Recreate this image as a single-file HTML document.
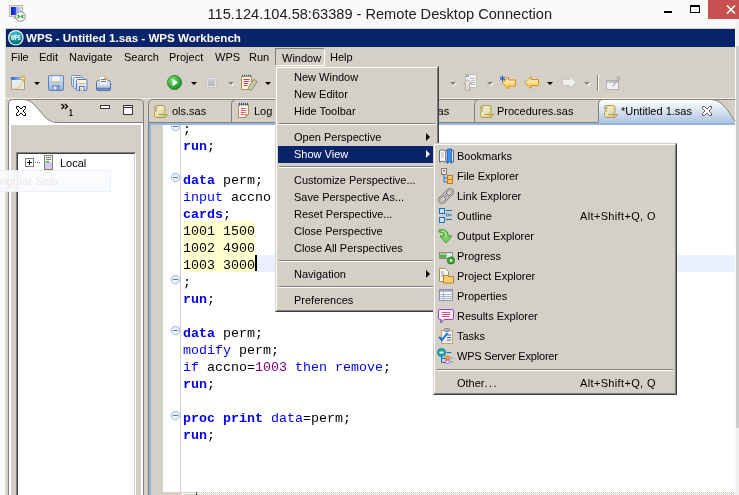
<!DOCTYPE html>
<html><head><meta charset="utf-8">
<style>
*{margin:0;padding:0;box-sizing:border-box}
html,body{width:739px;height:495px;overflow:hidden;background:#fafafa}
body{-webkit-font-smoothing:antialiased;will-change:transform}
body{position:relative;font-family:"Liberation Sans",sans-serif;font-size:11px;color:#000}
.a{position:absolute}
.g{background:#d4d0c8}
.t{position:absolute;white-space:pre;line-height:17px}
.code{position:absolute;left:183px;font-family:"Liberation Mono",monospace;font-size:13.333px;line-height:17px;white-space:pre;color:#000}
.k{color:#0000e8;font-weight:bold}
.r{color:#0000f0}
.n{color:#800080}
.dd{position:absolute;width:0;height:0;border-left:3px solid transparent;border-right:3px solid transparent;border-top:3px solid #000}
.ddg{border-top-color:#808080;filter:drop-shadow(1px 1px 0 #fff)}
.mi{position:absolute;left:18px;height:17px;line-height:17px;white-space:pre}
.si{position:absolute;left:23px;height:20px;line-height:20px;white-space:pre}
.sc{position:absolute;left:146px;height:20px;line-height:20px;white-space:pre}
.sep{position:absolute;height:2px;border-top:1px solid #808080;border-bottom:1px solid #fff}
.ico{position:absolute;left:5px;width:16px;height:16px}
</style></head><body>

<!-- RDP title bar -->
<div class="a" style="left:0;top:0;width:739px;height:28px;background:#fafafa"></div>
<svg class="a" style="left:8px;top:4px" width="18" height="18" viewBox="0 0 18 18">
  <defs><linearGradient id="mg" x1="0" x2="1"><stop offset="0" stop-color="#0818c8"/><stop offset="0.45" stop-color="#2848e8"/><stop offset="0.55" stop-color="#98b0f0"/><stop offset="1" stop-color="#c8d8f8"/></linearGradient></defs>
  <rect x="1.5" y="1.5" width="13" height="11" fill="#e8e4d8" stroke="#c0bcb0"/>
  <rect x="3" y="3" width="10" height="8" fill="url(#mg)"/>
  <rect x="5" y="13" width="6" height="2" fill="#c8c4b8"/>
  <circle cx="12.5" cy="12.5" r="4.8" fill="#f4f4f4" stroke="#888" stroke-width="1"/>
  <path d="M9.8 11 l1.6 1.5 l-1.6 1.5 M15.2 11 l-1.6 1.5 l1.6 1.5" fill="none" stroke="#20a020" stroke-width="1.3"/>
</svg>
<div class="t" style="left:207.5px;top:5px;font-size:14.6px;line-height:18px;color:#202020">115.124.104.58:63389 - Remote Desktop Connection</div>
<div class="a" style="left:664px;top:11px;width:8px;height:2px;background:#000"></div>
<div class="a" style="left:690px;top:5px;width:10px;height:8px;border:1px solid #000;border-top-width:2px"></div>
<div class="a" style="left:708px;top:0;width:31px;height:19px;background:#c75050"></div>
<svg class="a" style="left:726px;top:5px" width="10" height="9" viewBox="0 0 10 9"><path d="M1 0.5 L9 8.5 M9 0.5 L1 8.5" stroke="#fff" stroke-width="1.6"/></svg>

<!-- RDP right scrollbar -->
<div class="a" style="left:736px;top:19px;width:3px;height:27px;background:#f0f0f0"></div>
<div class="a" style="left:736px;top:46px;width:3px;height:382px;background:#cdcdcd"></div>
<div class="a" style="left:736px;top:428px;width:3px;height:67px;background:#f0f0f0"></div>

<!-- App window -->
<div class="a g" style="left:5px;top:28px;width:730px;height:467px"></div>
<div class="a" style="left:5px;top:28px;width:1px;height:467px;background:#dcdcdc"></div>
<div class="a" style="left:735px;top:28px;width:1px;height:467px;background:#fafafa"></div>
<div class="a" style="left:6px;top:29px;width:729px;height:18px;background:#0a246a"></div>
<svg class="a" style="left:7px;top:29px" width="18" height="18" viewBox="0 0 18 18">
  <defs><radialGradient id="wg" cx="0.45" cy="0.3" r="0.75"><stop offset="0" stop-color="#50d0d8"/><stop offset="0.6" stop-color="#10909a"/><stop offset="1" stop-color="#006068"/></radialGradient></defs>
  <circle cx="8.8" cy="8.8" r="7.8" fill="#f4fafa"/>
  <circle cx="8.8" cy="8.8" r="6.6" fill="url(#wg)"/>
  <text x="8.8" y="11.3" font-family="Liberation Sans" font-size="7" font-weight="bold" fill="#fff" text-anchor="middle" textLength="10" lengthAdjust="spacingAndGlyphs">WPS</text>
</svg>
<div class="t" style="left:26px;top:29px;line-height:18px;font-weight:bold;color:#fff;font-size:11.6px">WPS - Untitled 1.sas - WPS Workbench</div>

<!-- Menubar -->
<div class="t" style="left:11px;top:49px">File</div>
<div class="t" style="left:39px;top:49px">Edit</div>
<div class="t" style="left:69px;top:49px">Navigate</div>
<div class="t" style="left:124px;top:49px">Search</div>
<div class="t" style="left:169px;top:49px">Project</div>
<div class="t" style="left:215px;top:49px">WPS</div>
<div class="t" style="left:249px;top:49px">Run</div>
<div class="a" style="left:275px;top:48px;width:50px;height:18px;border-top:1px solid #808080;border-left:1px solid #808080;border-right:1px solid #fff;border-bottom:1px solid #fff"></div>
<div class="t" style="left:282px;top:50px">Window</div>
<div class="t" style="left:330px;top:49px">Help</div>

<!-- Toolbar -->
<div class="a" style="left:5px;top:98px;width:730px;height:1px;background:#f4f0e4"></div>


<!-- Toolbar icons -->
<svg class="a" style="left:10px;top:75px" width="17" height="16" viewBox="0 0 17 16">
  <defs><linearGradient id="nb" x1="0" x2="0" y1="0" y2="1"><stop offset="0" stop-color="#f0f6fc"/><stop offset="1" stop-color="#d8e8f8"/></linearGradient>
  <linearGradient id="nt" x1="0" x2="1"><stop offset="0" stop-color="#3868c0"/><stop offset="1" stop-color="#a8c8f0"/></linearGradient></defs>
  <rect x="1.5" y="2.5" width="13" height="12" fill="url(#nb)" stroke="#b8a068"/>
  <rect x="1" y="2" width="11" height="3" fill="url(#nt)"/>
  <path d="M4 14 Q11 13.5 12.5 6" stroke="#f0c848" stroke-width="1.1" fill="none"/>
  <path d="M13 0.5 v6 M10 3.5 h6" stroke="#c89830" stroke-width="2.2"/>
  <path d="M13 1 v5 M10.5 3.5 h5" stroke="#fff4c0" stroke-width="0.9"/>
</svg>
<div class="dd" style="left:34px;top:82px"></div>
<svg class="a" style="left:48px;top:75px" width="16" height="16" viewBox="0 0 16 16">
  <defs><linearGradient id="fb" x1="0" x2="0" y1="0" y2="1"><stop offset="0" stop-color="#dce8f8"/><stop offset="1" stop-color="#98b4e0"/></linearGradient></defs>
  <rect x="0.5" y="0.5" width="15" height="15" rx="1.5" fill="url(#fb)" stroke="#5c80c0"/>
  <rect x="3.5" y="1" width="9" height="6" fill="#f4f8fc" stroke="#a8c0e0" stroke-width="0.8"/>
  <path d="M4 6.5 h8" stroke="#e8c060" stroke-width="1"/>
  <rect x="4.5" y="10.5" width="7" height="5" fill="#5c80c0"/>
  <rect x="5.5" y="11.5" width="3" height="3" fill="#e8f0f8"/>
  <rect x="9" y="12" width="1.5" height="2" fill="#f0b040"/>
</svg>
<svg class="a" style="left:71px;top:75px" width="17" height="16" viewBox="0 0 17 16">
  <defs><linearGradient id="fa" x1="0" x2="0" y1="0" y2="1"><stop offset="0" stop-color="#f4f8fc"/><stop offset="1" stop-color="#c8d8f0"/></linearGradient></defs>
  <rect x="0.5" y="0.5" width="10" height="11" rx="1" fill="url(#fa)" stroke="#7890c0"/>
  <rect x="2.5" y="2.5" width="10" height="11" rx="1" fill="url(#fa)" stroke="#7890c0"/>
  <rect x="5.5" y="4.5" width="10.5" height="11" rx="1" fill="url(#fa)" stroke="#5c78b8"/>
  <rect x="7.5" y="5" width="6.5" height="4" fill="#f8f4e8"/>
  <path d="M7.5 8.5 h6.5" stroke="#e8b850" stroke-width="1"/>
  <rect x="8" y="11" width="5.5" height="4.5" fill="#4c70b0"/>
  <rect x="9" y="12" width="3.5" height="3.5" fill="#f0f4fa"/>
  <rect x="9.5" y="13" width="1" height="2" fill="#e8b040"/>
</svg>
<svg class="a" style="left:95px;top:75px" width="17" height="16" viewBox="0 0 17 16">
  <defs><linearGradient id="pb" x1="0" x2="0" y1="0" y2="1"><stop offset="0" stop-color="#f0f4fc"/><stop offset="0.6" stop-color="#c0d0f0"/><stop offset="1" stop-color="#7898d0"/></linearGradient></defs>
  <path d="M1.5 7.5 Q1.5 5.5 3.5 5.5 H13.5 Q15.5 5.5 15.5 7.5 V14 Q15.5 15.5 14 15.5 H3 Q1.5 15.5 1.5 14 z" fill="url(#pb)" stroke="#4c6cb0"/>
  <path d="M2 13.5 H15" stroke="#5878b8" stroke-width="1.5"/>
  <path d="M4.5 9.5 V1.5 H10 L12.5 4 V9.5" fill="#fafaf4" stroke="#c8c0a0" stroke-width="0.8"/>
  <path d="M10 1.5 V4 H12.5" fill="#f0b860" stroke="#d09040" stroke-width="0.8"/>
  <path d="M6 4.5 h5 M6 6.5 h5" stroke="#5878b8" stroke-width="1"/>
</svg>

<svg class="a" style="left:167px;top:75px" width="15" height="15" viewBox="0 0 15 15">
  <defs><radialGradient id="rg" cx="0.35" cy="0.3" r="0.8"><stop offset="0" stop-color="#78e070"/><stop offset="1" stop-color="#108818"/></radialGradient></defs>
  <circle cx="7.5" cy="7.5" r="7" fill="url(#rg)" stroke="#187820" stroke-width="0.8"/>
  <path d="M5.5 3.8 L11.2 7.5 L5.5 11.2 z" fill="#fff"/>
</svg>
<div class="dd" style="left:191px;top:82px"></div>
<svg class="a" style="left:206px;top:77px" width="11" height="11" viewBox="0 0 11 11">
  <defs><linearGradient id="st" x1="0" x2="0" y1="0" y2="1"><stop offset="0" stop-color="#d0d0d0"/><stop offset="1" stop-color="#b8b8b8"/></linearGradient></defs>
  <rect x="0.5" y="0.5" width="10" height="10" rx="1" fill="#e4e4e4" stroke="#c8c8c8"/>
  <rect x="2" y="2" width="7" height="7" fill="url(#st)"/>
</svg>
<div class="dd ddg" style="left:228px;top:82px"></div>
<svg class="a" style="left:240px;top:74px" width="18" height="17" viewBox="0 0 18 17">
  <path d="M1.5 2.5 h10 v11 l-2 2 h-8 z" fill="#fffcf4" stroke="#b09040"/>
  <path d="M2 1.5 h9" stroke="#305898" stroke-width="1.6" stroke-dasharray="1 1"/>
  <path d="M3.5 5.5 h6 M3.5 7.5 h6 M3.5 9.5 h5 M3.5 11.5 h4" stroke="#e83838" stroke-width="1"/>
  <path d="M8 14 L13 6 Q14.5 5 16 6.5 L17 8 L12 15.5 Q10 16.5 8.5 15.5 z" fill="#c8c8a0" stroke="#808060" stroke-width="0.8"/>
</svg>
<div class="dd" style="left:265px;top:82px"></div>

<div class="dd ddg" style="left:450px;top:82px"></div>
<svg class="a" style="left:463px;top:74px" width="15" height="17" viewBox="0 0 15 17">
  <rect x="2.5" y="0.5" width="11" height="13" fill="#f4f4f4" stroke="#c0c0c0"/>
  <rect x="3" y="1" width="3" height="2" fill="#a8a8a8"/>
  <path d="M7 4.5 h5 M8 6.5 h4 M8 8.5 h4 M8 10.5 h4" stroke="#b8b8b8" stroke-width="1"/>
  <path d="M4.5 5.5 L0.5 9.5 H2.5 V16.5 H6.5 V9.5 H8.5 z" fill="#e8e0d8" stroke="#b0aca4" stroke-width="1"/>
</svg>
<div class="dd ddg" style="left:487px;top:82px"></div>
<svg class="a" style="left:499px;top:75px" width="18" height="16" viewBox="0 0 18 16">
  <defs><linearGradient id="ya" x1="0" x2="0" y1="0" y2="1"><stop offset="0" stop-color="#fff8d0"/><stop offset="1" stop-color="#f8c850"/></linearGradient></defs>
  <path d="M3.5 8 L9.5 2 V5 H16.5 V11 H9.5 V14 z" fill="url(#ya)" stroke="#d89018" stroke-linejoin="miter"/>
  <path d="M3.5 0.5 v6 M0.8 2 l5.4 3 M0.8 5 l5.4 -3" stroke="#2050b0" stroke-width="1"/>
</svg>
<svg class="a" style="left:524px;top:76px" width="16" height="14" viewBox="0 0 16 14">
  <path d="M1 6.5 L7 0.5 V3.5 H14.5 V9.5 H7 V12.5 z" fill="url(#ya)" stroke="#d89018"/>
</svg>
<div class="dd" style="left:547px;top:82px"></div>
<svg class="a" style="left:561px;top:76px" width="16" height="14" viewBox="0 0 16 14">
  <path d="M15 6.5 L9 0.5 V3.5 H1.5 V9.5 H9 V12.5 z" fill="#f0f0f0" stroke="#c8c8c8"/>
</svg>
<div class="dd ddg" style="left:584px;top:82px"></div>
<div class="a" style="left:597px;top:75px;width:1px;height:16px;background:#808080"></div>
<div class="a" style="left:598px;top:75px;width:1px;height:16px;background:#fff"></div>
<svg class="a" style="left:606px;top:76px" width="15" height="14" viewBox="0 0 15 14">
  <rect x="0.5" y="4.5" width="12" height="9" fill="#f4f4f4" stroke="#b0b0b0"/>
  <rect x="1" y="5" width="11" height="2" fill="#c4c4cc"/>
  <path d="M6.5 10.5 L12.5 3" stroke="#a0a0a0" stroke-width="1.2"/>
  <path d="M10 1.5 L13.5 1 L13 4.5" fill="none" stroke="#a8a8a8" stroke-width="1"/>
</svg>


<!-- Left panel -->
<svg class="a" style="left:0;top:95px" width="150" height="400" viewBox="0 95 150 400">
  <path d="M9 125 V104 Q9 100 13 100 H23 C30 100 33 103 39 110 C45 117 49 122 57 122.5 H142 V125 z" fill="#fff"/>
  <path d="M8.5 495 V104 Q8.5 99.5 13 99.5 H139 Q143.5 99.5 143.5 104 V495" fill="none" stroke="#808080"/>
  <path d="M23 99.5 C30 99.5 33 103 39 110 C45 117 49 122.5 57 122.5 H143" fill="none" stroke="#808080"/>
</svg>
<div class="a" style="left:9px;top:123px;width:134px;height:2px;background:#fff"></div>
<div class="a" style="left:9px;top:123px;width:2px;height:372px;background:#fff"></div>
<div class="a" style="left:141px;top:123px;width:2px;height:372px;background:#fff"></div>
<svg class="a" style="left:16px;top:106px" width="10" height="10" viewBox="0 0 10 10">
  <path d="M0.5 0.5 H2.5 L5 3 L7.5 0.5 H9.5 V2.5 L7 5 L9.5 7.5 V9.5 H7.5 L5 7 L2.5 9.5 H0.5 V7.5 L3 5 L0.5 2.5 z" fill="#fff" stroke="#000" stroke-width="1"/>
</svg>
<svg class="a" style="left:61px;top:103px" width="12" height="13" viewBox="0 0 12 13">
  <path d="M0.5 1 L3 3.5 L0.5 6 M4 1 L6.5 3.5 L4 6" fill="none" stroke="#000" stroke-width="1.3"/>
  <path d="M8.5 7.5 L10 6.5 V12.5 M8.5 12.5 H11.5" fill="none" stroke="#000" stroke-width="1"/>
</svg>
<div class="a" style="left:100px;top:105px;width:10px;height:4px;border:1px solid #383838;background:#fff"></div>
<div class="a" style="left:123px;top:105px;width:10px;height:10px;border:1px solid #383838;background:#fff"></div>
<div class="a" style="left:124px;top:107px;width:8px;height:1px;background:#383838"></div>
<!-- tree box -->
<div class="a" style="left:16px;top:152px;width:120px;height:343px;border-left:1px solid #808080;border-top:1px solid #808080;border-right:1px solid #fff;background:#fff"></div>
<div class="a" style="left:17px;top:153px;width:118px;height:342px;border-left:1px solid #404040;border-top:1px solid #404040;border-right:1px solid #d4d0c8;background:#fff"></div>
<svg class="a" style="left:25px;top:158px" width="16" height="9" viewBox="0 0 16 9">
  <rect x="0.5" y="0.5" width="8" height="8" fill="#fff" stroke="#808080"/>
  <path d="M2 4.5 h5 M4.5 2 v5" stroke="#000" stroke-width="1"/>
  <path d="M10 4.5 h1 M12 4.5 h1 M14 4.5 h1" stroke="#808080"/>
</svg>
<svg class="a" style="left:44px;top:155px" width="9" height="15" viewBox="0 0 9 15">
  <rect x="0.5" y="0.5" width="8" height="14" fill="#d8c8f0" stroke="#808060"/>
  <rect x="1" y="1" width="7" height="6" fill="#f4f4f4"/>
  <path d="M2 2.5 h5 M2 4.5 h5" stroke="#606060" stroke-width="0.8"/>
  <rect x="2" y="6" width="3" height="1.5" fill="#20d020"/>
</svg>
<div class="t" style="left:60px;top:155px">Local</div>
<!-- snip overlay -->
<div class="a" style="left:-1px;top:170px;width:112px;height:22px;background:rgba(250,251,253,0.93);border:1px solid rgba(232,238,247,0.95)"></div>
<div class="t" style="left:-30px;top:172px;font-size:11.5px;line-height:18px;color:#ede5e5">Rectangular Snip</div>

<!-- Editor panel -->
<svg class="a" style="left:145px;top:95px" width="594" height="35" viewBox="145 95 594 35">
  <path d="M148.5 130 V104 Q148.5 99.5 153 99.5 H735" fill="none" stroke="#808080"/>
  <path d="M149 122.5 H598" stroke="#808080"/>
  <path d="M231.5 122 V104 Q231.5 100 235.5 99.5" fill="none" stroke="#808080"/>
  <path d="M474.5 122 V104 Q474.5 100 478.5 99.5" fill="none" stroke="#808080"/>
  <defs><linearGradient id="tg" x1="0" y1="0" x2="0" y2="1"><stop offset="0" stop-color="#ffffff"/><stop offset="1" stop-color="#a6bfe0"/></linearGradient></defs>
  <path d="M599 125 V104 Q599 100 603 100 H711 C718 100 722 104 727 110 C731 115 733 119 735 121 V125 z" fill="url(#tg)"/>
  <path d="M598.5 122.5 V104 Q598.5 99.5 603 99.5 H711 C718 99.5 722 103.5 727 109.5 C731 114.5 733 119 735 121" fill="none" stroke="#808080"/>
</svg>
<div class="a" style="left:149px;top:123px;width:586px;height:2px;background:#98b4dc"></div>
<div class="a" style="left:149px;top:123px;width:2px;height:372px;background:#98b4dc"></div>
<div class="a" style="left:148px;top:125px;width:1px;height:370px;background:#808080"></div>
<div class="a" style="left:151px;top:125px;width:584px;height:367px;background:#fff"></div>
<div class="a g" style="left:151px;top:125px;width:12px;height:367px"></div>
<div class="a" style="left:180px;top:125px;width:1px;height:367px;background:#d4d0c8"></div>
<!-- horizontal scrollbar strip -->
<div class="a g" style="left:151px;top:492px;width:584px;height:3px"></div>
<div class="a" style="left:197px;top:492px;width:538px;height:3px;background-image:conic-gradient(#fff 25%,#d4d0c8 0 50%,#fff 0 75%,#d4d0c8 0);background-size:2px 2px"></div>
<div class="a" style="left:182px;top:493px;width:14px;height:2px;border-top:1px solid #fff;border-left:1px solid #fff;background:#d4d0c8"></div>
<div class="a" style="left:196px;top:492px;width:1px;height:3px;background:#404040"></div>


<!-- Code -->
<div class="a" style="left:151px;top:125px;width:584px;height:367px;overflow:hidden">
  <div class="a" style="left:32px;top:96px;width:72px;height:51px;background:#ffffd0"></div>
  <div class="a" style="left:105px;top:130px;width:479px;height:17px;background:#e8f2fe"></div>
  <div class="a" style="left:104px;top:130px;width:2px;height:16px;background:#000"></div>
  <div class="code" style="left:32px;top:-4.5px">;
<span class="k">run</span>;

<span class="k">data</span> perm;
<span class="r">input</span> accno amount;
<span class="k">cards</span>;
1001 1500
1002 4900
1003 3000
;
<span class="k">run</span>;

<span class="k">data</span> perm;
<span class="r">modify</span> perm;
<span class="r">if</span> accno=<span class="n">1003</span> <span class="r">then</span> <span class="r">remove</span>;
<span class="k">run</span>;

<span class="k">proc</span> <span class="k">print</span> <span class="r">data</span>=perm;
<span class="k">run</span>;</div>
</div>
<svg class="a" style="left:170px;top:125px" width="12" height="320" viewBox="0 125 12 320">
  <defs><radialGradient id="fg" cx="0.5" cy="0.6" r="0.6"><stop offset="0" stop-color="#f4faff"/><stop offset="1" stop-color="#d8e6f4"/></radialGradient></defs>
  <g id="fold"><circle cx="5.5" cy="126.5" r="4.3" fill="url(#fg)" stroke="#a8bcd8" stroke-width="1"/><path d="M3 126.5 h5" stroke="#6878a0" stroke-width="1"/></g>
  <g transform="translate(0,51)"><circle cx="5.5" cy="126.5" r="4.3" fill="url(#fg)" stroke="#a8bcd8" stroke-width="1"/><path d="M3 126.5 h5" stroke="#6878a0" stroke-width="1"/></g>
  <g transform="translate(0,153)"><circle cx="5.5" cy="126.5" r="4.3" fill="url(#fg)" stroke="#a8bcd8" stroke-width="1"/><path d="M3 126.5 h5" stroke="#6878a0" stroke-width="1"/></g>
  <g transform="translate(0,204)"><circle cx="5.5" cy="126.5" r="4.3" fill="url(#fg)" stroke="#a8bcd8" stroke-width="1"/><path d="M3 126.5 h5" stroke="#6878a0" stroke-width="1"/></g>
  <g transform="translate(0,289)"><circle cx="5.5" cy="126.5" r="4.3" fill="url(#fg)" stroke="#a8bcd8" stroke-width="1"/><path d="M3 126.5 h5" stroke="#6878a0" stroke-width="1"/></g>
</svg>

<!-- Tabs content -->
<svg class="a" style="left:153px;top:105px" width="15" height="13" viewBox="0 0 15 13">
  <defs><linearGradient id="sg" x1="0" y1="0" x2="1" y2="1"><stop offset="0" stop-color="#f4f4d8"/><stop offset="0.5" stop-color="#e6e4b4"/><stop offset="1" stop-color="#b8b488"/></linearGradient></defs>
  <g id="scrollp">
  <path d="M1.5 2.5 Q1.5 0.5 3.5 0.5 H10 Q12 0.5 12 2.5 V6.5 Q12 8 10.5 8.5 V9.5 H14.5 L13 11.5 Q12.5 12.5 11 12.5 H4 Q1.5 12.5 1.5 10.5 V7.5 Q1.5 6 3.5 6 V5 Q1.5 5 1.5 2.5 z" fill="url(#sg)" stroke="#b89838" stroke-width="1"/>
  <circle cx="3.3" cy="2.8" r="1.3" fill="#a8b098"/>
  <path d="M5 9.5 H10" stroke="#a09858" stroke-width="0.8"/>
  </g>
</svg>
<div class="t" style="left:172px;top:103px">ols.sas</div>
<svg class="a" style="left:238px;top:102px" width="12" height="16" viewBox="0 0 12 16">
  <path d="M0.5 2.5 H10.5 V12.5 L7.5 15.5 H0.5 z" fill="#f4f8fe" stroke="#a89040"/>
  <path d="M7.5 15.5 V12.5 H10.5" fill="#c8b878" stroke="#a89040" stroke-width="0.8"/>
  <path d="M1 1.5 h1 M3 1.5 h1 M5 1.5 h1 M7 1.5 h1 M9 1.5 h1" stroke="#2050a0" stroke-width="1.4"/>
  <path d="M1 3 h1 M3 3 h1 M5 3 h1 M7 3 h1 M9 3 h1" stroke="#102858" stroke-width="1"/>
  <defs><linearGradient id="rl" x1="0" x2="1"><stop offset="0" stop-color="#f02020"/><stop offset="1" stop-color="#f8c0c0"/></linearGradient></defs>
  <path d="M3 6.5 h6 M3 8.5 h6 M3 10.5 h6 M3 12.5 h4" stroke="url(#rl)" stroke-width="1"/>
</svg>
<div class="t" style="left:254px;top:103px">Log</div>
<div class="t" style="left:415px;top:103px">ols.sas</div>
<div class="t" style="left:497px;top:103px">Procedures.sas</div>
<div class="t" style="left:621px;top:103px">*Untitled 1.sas</div>
<svg class="a" style="left:702px;top:106px" width="10" height="10" viewBox="0 0 10 10">
  <path d="M0.5 0.5 H2.5 L5 3 L7.5 0.5 H9.5 V2.5 L7 5 L9.5 7.5 V9.5 H7.5 L5 7 L2.5 9.5 H0.5 V7.5 L3 5 L0.5 2.5 z" fill="#fff" stroke="#606060" stroke-width="1"/>
</svg>


<!-- Window menu -->
<div class="a" style="left:275px;top:66px;width:164px;height:246px;background:#d4d0c8;border-top:1px solid #d4d0c8;border-left:1px solid #d4d0c8;border-right:1px solid #404040;border-bottom:1px solid #404040">
 <div class="a" style="left:0;top:0;width:162px;height:244px;border-top:1px solid #fff;border-left:1px solid #fff;border-right:1px solid #808080;border-bottom:1px solid #808080"></div>
 <div class="mi" style="top:2px">New Window</div>
 <div class="mi" style="top:19px">New Editor</div>
 <div class="mi" style="top:36px">Hide Toolbar</div>
 <div class="sep" style="left:3px;top:56px;width:156px"></div>
 <div class="mi" style="top:62px">Open Perspective</div>
 <div class="a" style="left:150px;top:66px;width:0;height:0;border-top:4px solid transparent;border-bottom:4px solid transparent;border-left:4px solid #000"></div>
 <div class="a" style="left:2px;top:79px;width:158px;height:17px;background:#0a246a"></div>
 <div class="mi" style="top:79px;color:#fff">Show View</div>
 <div class="a" style="left:150px;top:83px;width:0;height:0;border-top:4px solid transparent;border-bottom:4px solid transparent;border-left:4px solid #fff"></div>
 <div class="sep" style="left:3px;top:99px;width:156px"></div>
 <div class="mi" style="top:105px">Customize Perspective...</div>
 <div class="mi" style="top:122px">Save Perspective As...</div>
 <div class="mi" style="top:139px">Reset Perspective...</div>
 <div class="mi" style="top:156px">Close Perspective</div>
 <div class="mi" style="top:173px">Close All Perspectives</div>
 <div class="sep" style="left:3px;top:193px;width:156px"></div>
 <div class="mi" style="top:199px">Navigation</div>
 <div class="a" style="left:150px;top:203px;width:0;height:0;border-top:4px solid transparent;border-bottom:4px solid transparent;border-left:4px solid #000"></div>
 <div class="sep" style="left:3px;top:219px;width:156px"></div>
 <div class="mi" style="top:225px">Preferences</div>
</div>

<!-- Show View submenu -->
<div class="a" style="left:433px;top:143px;width:244px;height:252px;background:#d4d0c8;border-top:1px solid #d4d0c8;border-left:1px solid #d4d0c8;border-right:1px solid #404040;border-bottom:1px solid #404040">
 <div class="a" style="left:0;top:0;width:242px;height:250px;border-top:1px solid #fff;border-left:1px solid #fff;border-right:1px solid #808080;border-bottom:1px solid #808080"></div>
 <div class="si" style="top:2px">Bookmarks</div>
 <div class="si" style="top:22px">File Explorer</div>
 <div class="si" style="top:42px">Link Explorer</div>
 <div class="si" style="top:62px">Outline</div>
 <div class="sc" style="top:62px;letter-spacing:0.35px">Alt+Shift+Q, O</div>
 <div class="si" style="top:82px">Output Explorer</div>
 <div class="si" style="top:102px">Progress</div>
 <div class="si" style="top:122px">Project Explorer</div>
 <div class="si" style="top:142px">Properties</div>
 <div class="si" style="top:162px">Results Explorer</div>
 <div class="si" style="top:182px">Tasks</div>
 <div class="si" style="top:202px;letter-spacing:-0.2px">WPS Server Explorer</div>
 <div class="sep" style="left:3px;top:225px;width:236px"></div>
 <div class="mi" style="top:231px;left:23px">Other<span style="letter-spacing:1.4px">...</span></div>
 <div class="mi" style="top:231px;left:146px;letter-spacing:0.35px">Alt+Shift+Q, Q</div>
</div>


<!-- submenu icons (abs) -->
<svg class="a" style="left:438px;top:148px" width="16" height="16" viewBox="0 0 16 16">
  <path d="M1.5 2.5 Q4 1 8 2.5 V14 Q4 12.5 1.5 14 z" fill="#f8f8f0" stroke="#686880"/>
  <path d="M8 2.5 Q12 1 15.5 2.5 V14 Q12 12.5 8 14 z" fill="#f0f0e8" stroke="#686880"/>
  <path d="M3 5 h3 M3 7 h3 M3 9 h3" stroke="#a0a8b8" stroke-width="0.8"/>
  <path d="M9.5 1 h4 v14.5 l-2 -2 l-2 2 z" fill="#3890e8" stroke="#1060c0" stroke-width="0.8"/>
</svg>
<svg class="a" style="left:438px;top:168px" width="16" height="16" viewBox="0 0 16 16">
  <rect x="3.5" y="0.5" width="5" height="6" fill="#e8e0f0" stroke="#808060"/>
  <rect x="5" y="2" width="2" height="1.5" fill="#c060a0"/>
  <path d="M6 7 V14 M6 10 H10 M6 14 H10" stroke="#2070c0" stroke-width="1"/>
  <rect x="9.5" y="7.5" width="5" height="4" fill="#f8c860" stroke="#c07820"/>
  <rect x="9.5" y="11.5" width="5" height="4" fill="#f8c860" stroke="#c07820"/>
</svg>
<svg class="a" style="left:438px;top:188px" width="16" height="16" viewBox="0 0 16 16">
  <g transform="rotate(-45 8 8)" fill="none">
    <rect x="-0.5" y="5.2" width="10" height="5.6" rx="2.8" stroke="#6c6c58" stroke-width="2"/>
    <rect x="6.5" y="5.2" width="10" height="5.6" rx="2.8" stroke="#6c6c58" stroke-width="2"/>
    <rect x="-0.5" y="5.2" width="10" height="5.6" rx="2.8" stroke="#e0d0f4" stroke-width="0.9"/>
    <rect x="6.5" y="5.2" width="10" height="5.6" rx="2.8" stroke="#e0d0f4" stroke-width="0.9"/>
  </g>
</svg>
<svg class="a" style="left:438px;top:208px" width="16" height="16" viewBox="0 0 16 16">
  <rect x="1.5" y="0.5" width="5" height="5" fill="#c8e0f8" stroke="#2070c0"/>
  <rect x="1.5" y="9.5" width="5" height="5" fill="#c8e0f8" stroke="#2070c0"/>
  <path d="M8 2.5 h6 M8 11.5 h6 M11 7 h3" stroke="#2070c0" stroke-width="1"/>
  <rect x="8.5" y="6" width="2" height="2" fill="#fff" stroke="#2070c0" stroke-width="0.8"/>
</svg>
<svg class="a" style="left:438px;top:228px" width="16" height="16" viewBox="0 0 16 16">
  <path d="M1 2 Q7 0.5 10 5 L10 8 L14 8 L8 15 L2 8 L6 8 L6 6 Q5 4 1 4 z" fill="#80d068" stroke="#30a020" stroke-width="1"/>
  <path d="M4 3 Q7.5 3 8 6 V9" stroke="#c8f0b0" stroke-width="1" fill="none"/>
</svg>
<svg class="a" style="left:438px;top:248px" width="17" height="17" viewBox="0 0 17 17">
  <rect x="1.5" y="4.5" width="13" height="6" fill="#d8e8f8" stroke="#908878"/>
  <rect x="2" y="5" width="6.5" height="5" fill="#5cb04c"/>
  <rect x="2" y="5" width="6.5" height="2" fill="#98d888"/>
  <circle cx="13" cy="12.5" r="3.6" fill="#38a028" stroke="#1c7818" stroke-width="0.8"/>
  <path d="M11.8 10.6 L15 12.5 L11.8 14.4 z" fill="#fff"/>
</svg>
<svg class="a" style="left:438px;top:268px" width="16" height="16" viewBox="0 0 16 16">
  <path d="M1.5 0.5 h6 l3 3 v10 h-9 z" fill="#f8f8f0" stroke="#a09060"/>
  <path d="M3 4 h3 M3 6 h3 M3 8 h3" stroke="#6080c0" stroke-width="0.8"/>
  <path d="M5.5 7.5 h4 l1 1 h5 v6.5 h-10 z" fill="#f8d070" stroke="#c07820"/>
</svg>
<svg class="a" style="left:438px;top:288px" width="16" height="16" viewBox="0 0 16 16">
  <rect x="1.5" y="1.5" width="13" height="11" fill="#f8fafc" stroke="#8890a8"/>
  <rect x="2" y="2" width="12" height="2" fill="#a8b0c4"/>
  <path d="M2 6.5 h12 M2 8.5 h12 M2 10.5 h12 M5.5 4 v8" stroke="#a8b4cc" stroke-width="1"/>
</svg>
<svg class="a" style="left:438px;top:308px" width="16" height="16" viewBox="0 0 16 16">
  <path d="M2 1.5 h12 q1.5 0 1.5 1.5 v7 q0 1.5 -1.5 1.5 h-8 l-3 3.5 v-3.5 h-1 q-1.5 0 -1.5 -1.5 v-7 q0 -1.5 1.5 -1.5 z" fill="#f8f0fc" stroke="#a040c0"/>
  <path d="M4 4.5 h8 M4 6.5 h8 M4 8.5 h7" stroke="#d85098" stroke-width="1"/>
  <path d="M3 14.5 v-3" stroke="#4060d0"/>
</svg>
<svg class="a" style="left:438px;top:328px" width="16" height="16" viewBox="0 0 16 16">
  <rect x="3.5" y="2.5" width="11" height="13" fill="#eef2f8" stroke="#c8a060"/>
  <rect x="6.5" y="0.5" width="5" height="3" rx="1" fill="#a8b0c0" stroke="#808898"/>
  <path d="M9 7 h4 M9 9.5 h4 M9 12 h4" stroke="#4060a0" stroke-width="1"/>
  <path d="M1 9 L4 12 L9.5 5" fill="none" stroke="#1070e0" stroke-width="2"/>
</svg>
<svg class="a" style="left:437px;top:348px" width="17" height="16" viewBox="0 0 17 16">
  <path d="M4.5 7 V14.5 H8 M4.5 10.5 H8" stroke="#2070c0" stroke-width="1" fill="none"/>
  <circle cx="4.5" cy="4.5" r="4" fill="#20a0a8" stroke="#108088" stroke-width="0.8"/>
  <rect x="2.5" y="3.5" width="4" height="2" fill="#e0f8f8"/>
  <path d="M9.5 4.5 h5" stroke="#2070c0" stroke-width="1.2"/>
  <ellipse cx="10.5" cy="10" rx="2.3" ry="1.8" fill="#f0a060" stroke="#c06020" stroke-width="0.8"/>
  <ellipse cx="10.5" cy="14" rx="2.3" ry="1.8" fill="#e8d0f8" stroke="#a060d0" stroke-width="0.8"/>
  <path d="M14 10 h1.5 M14 14 h1.5" stroke="#2070c0" stroke-width="1"/>
</svg>
<!-- tab scroll icons -->
<svg class="a" style="left:479px;top:105px" width="15" height="13" viewBox="0 0 15 13">
  
  <path d="M1.5 2.5 Q1.5 0.5 3.5 0.5 H10 Q12 0.5 12 2.5 V6.5 Q12 8 10.5 8.5 V9.5 H14.5 L13 11.5 Q12.5 12.5 11 12.5 H4 Q1.5 12.5 1.5 10.5 V7.5 Q1.5 6 3.5 6 V5 Q1.5 5 1.5 2.5 z" fill="url(#sg)" stroke="#b89838" stroke-width="1"/>
  <circle cx="3.3" cy="2.8" r="1.3" fill="#a8b098"/>
  <path d="M5 9.5 H10" stroke="#a09858" stroke-width="0.8"/>
  
</svg>
<svg class="a" style="left:603px;top:105px" width="15" height="13" viewBox="0 0 15 13">
  
  <path d="M1.5 2.5 Q1.5 0.5 3.5 0.5 H10 Q12 0.5 12 2.5 V6.5 Q12 8 10.5 8.5 V9.5 H14.5 L13 11.5 Q12.5 12.5 11 12.5 H4 Q1.5 12.5 1.5 10.5 V7.5 Q1.5 6 3.5 6 V5 Q1.5 5 1.5 2.5 z" fill="url(#sg)" stroke="#b89838" stroke-width="1"/>
  <circle cx="3.3" cy="2.8" r="1.3" fill="#a8b098"/>
  <path d="M5 9.5 H10" stroke="#a09858" stroke-width="0.8"/>
  
</svg>

</body></html>
